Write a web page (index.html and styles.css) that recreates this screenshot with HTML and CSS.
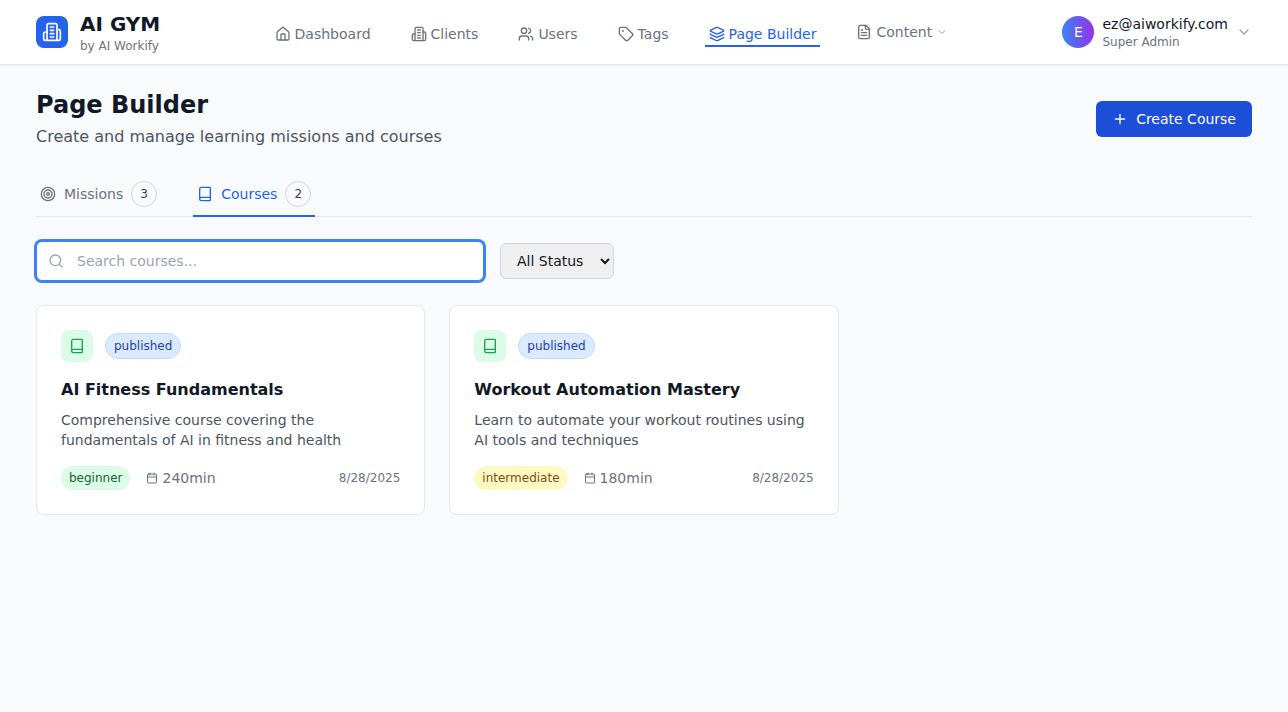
FILE: index.html
```html
<!DOCTYPE html>
<html lang="en">
<head>
<meta charset="utf-8">
<title>Page Builder</title>
<link rel="stylesheet" href="styles.css">
</head>
<body>
<header class="topbar">
  <div class="brand">
    <div class="brand-mark">
      <svg class="i20" viewBox="0 0 24 24"><path d="M6 22V4a2 2 0 0 1 2-2h8a2 2 0 0 1 2 2v18Z"/><path d="M6 12H4a2 2 0 0 0-2 2v6a2 2 0 0 0 2 2h2"/><path d="M18 9h2a2 2 0 0 1 2 2v9a2 2 0 0 1-2 2h-2"/><path d="M10 6h4"/><path d="M10 10h4"/><path d="M10 14h4"/><path d="M10 18h4"/></svg>
    </div>
    <div class="brand-text">
      <div class="brand-name">AI GYM</div>
      <div class="brand-sub">by AI Workify</div>
    </div>
  </div>
  <nav class="nav">
    <a class="nav-link"><svg class="i16" viewBox="0 0 24 24"><path d="M15 21v-8a1 1 0 0 0-1-1h-4a1 1 0 0 0-1 1v8"/><path d="M3 10a2 2 0 0 1 .709-1.528l7-5.999a2 2 0 0 1 2.582 0l7 5.999A2 2 0 0 1 21 10v9a2 2 0 0 1-2 2H5a2 2 0 0 1-2-2z"/></svg>Dashboard</a>
    <a class="nav-link"><svg class="i16" viewBox="0 0 24 24"><path d="M6 22V4a2 2 0 0 1 2-2h8a2 2 0 0 1 2 2v18Z"/><path d="M6 12H4a2 2 0 0 0-2 2v6a2 2 0 0 0 2 2h2"/><path d="M18 9h2a2 2 0 0 1 2 2v9a2 2 0 0 1-2 2h-2"/><path d="M10 6h4"/><path d="M10 10h4"/><path d="M10 14h4"/><path d="M10 18h4"/></svg>Clients</a>
    <a class="nav-link"><svg class="i16" viewBox="0 0 24 24"><path d="M16 21v-2a4 4 0 0 0-4-4H6a4 4 0 0 0-4 4v2"/><circle cx="9" cy="7" r="4"/><path d="M22 21v-2a4 4 0 0 0-3-3.87"/><path d="M16 3.13a4 4 0 0 1 0 7.75"/></svg>Users</a>
    <a class="nav-link"><svg class="i16" viewBox="0 0 24 24"><path d="M12.586 2.586A2 2 0 0 0 11.172 2H4a2 2 0 0 0-2 2v7.172a2 2 0 0 0 .586 1.414l8.704 8.704a2.426 2.426 0 0 0 3.42 0l6.58-6.58a2.426 2.426 0 0 0 0-3.42z"/><circle cx="7.5" cy="7.5" r=".5"/></svg>Tags</a>
    <a class="nav-link active"><svg class="i16" viewBox="0 0 24 24"><path d="M12.83 2.18a2 2 0 0 0-1.66 0L2.6 6.08a1 1 0 0 0 0 1.83l8.58 3.91a2 2 0 0 0 1.66 0l8.58-3.9a1 1 0 0 0 0-1.83z"/><path d="M2 12a1 1 0 0 0 .58.91l8.6 3.91a2 2 0 0 0 1.65 0l8.58-3.9A1 1 0 0 0 22 12"/><path d="M2 17a1 1 0 0 0 .58.91l8.6 3.91a2 2 0 0 0 1.65 0l8.58-3.9A1 1 0 0 0 22 17"/></svg>Page Builder</a>
    <a class="nav-link dropdown"><svg class="i16" viewBox="0 0 24 24"><path d="M15 2H6a2 2 0 0 0-2 2v16a2 2 0 0 0 2 2h12a2 2 0 0 0 2-2V7Z"/><path d="M14 2v4a2 2 0 0 0 2 2h4"/><path d="M10 9H8"/><path d="M16 13H8"/><path d="M16 17H8"/></svg>Content<svg class="i12" viewBox="0 0 24 24"><path d="m6 9 6 6 6-6"/></svg></a>
  </nav>
  <div class="user">
    <div class="avatar">E</div>
    <div class="user-text">
      <div class="user-mail">ez@aiworkify.com</div>
      <div class="user-role">Super Admin</div>
    </div>
    <svg class="i16 user-caret" viewBox="0 0 24 24"><path d="m6 9 6 6 6-6"/></svg>
  </div>
</header>
<main class="page">
  <section class="page-head">
    <div>
      <h1 class="title">Page Builder</h1>
      <p class="subtitle">Create and manage learning missions and courses</p>
    </div>
    <button class="primary"><svg class="i16" viewBox="0 0 24 24"><path d="M5 12h14"/><path d="M12 5v14"/></svg>Create Course</button>
  </section>
  <div class="tabs">
    <a class="tab"><svg class="i16" viewBox="0 0 24 24"><circle cx="12" cy="12" r="10"/><circle cx="12" cy="12" r="6"/><circle cx="12" cy="12" r="2"/></svg>Missions<span class="count">3</span></a>
    <a class="tab current"><svg class="i16" viewBox="0 0 24 24"><path d="M4 19.5v-15A2.5 2.5 0 0 1 6.5 2H19a1 1 0 0 1 1 1v18a1 1 0 0 1-1 1H6.5a1 1 0 0 1 0-5H20"/></svg>Courses<span class="count">2</span></a>
  </div>
  <div class="filters">
    <div class="search">
      <svg class="i16 search-icon" viewBox="0 0 24 24"><path d="m21 21-4.34-4.34"/><circle cx="11" cy="11" r="8"/></svg>
      <input class="search-input" type="text" placeholder="Search courses...">
    </div>
    <select class="status"><option>All Status</option></select>
  </div>
  <div class="cards">
    <article class="card">
      <div class="card-top">
        <div class="card-icon"><svg class="i16" viewBox="0 0 24 24"><path d="M4 19.5v-15A2.5 2.5 0 0 1 6.5 2H19a1 1 0 0 1 1 1v18a1 1 0 0 1-1 1H6.5a1 1 0 0 1 0-5H20"/></svg></div>
        <span class="state">published</span>
      </div>
      <h3 class="card-title">AI Fitness Fundamentals</h3>
      <p class="card-desc">Comprehensive course covering the fundamentals of AI in fitness and health</p>
      <div class="card-meta">
        <span class="level beginner">beginner</span>
        <span class="duration"><svg class="i12" viewBox="0 0 24 24"><path d="M8 2v4"/><path d="M16 2v4"/><rect x="3" y="4" width="18" height="18" rx="2"/><path d="M3 10h18"/></svg>240min</span>
        <span class="date">8/28/2025</span>
      </div>
    </article>
    <article class="card">
      <div class="card-top">
        <div class="card-icon"><svg class="i16" viewBox="0 0 24 24"><path d="M4 19.5v-15A2.5 2.5 0 0 1 6.5 2H19a1 1 0 0 1 1 1v18a1 1 0 0 1-1 1H6.5a1 1 0 0 1 0-5H20"/></svg></div>
        <span class="state">published</span>
      </div>
      <h3 class="card-title">Workout Automation Mastery</h3>
      <p class="card-desc">Learn to automate your workout routines using AI tools and techniques</p>
      <div class="card-meta">
        <span class="level intermediate">intermediate</span>
        <span class="duration"><svg class="i12" viewBox="0 0 24 24"><path d="M8 2v4"/><path d="M16 2v4"/><rect x="3" y="4" width="18" height="18" rx="2"/><path d="M3 10h18"/></svg>180min</span>
        <span class="date">8/28/2025</span>
      </div>
    </article>
  </div>
</main>
</body>
</html>
```
FILE: styles.css
```css
* { box-sizing: border-box; }
html, body { margin: 0; padding: 0; }
body {
  min-height: 712px;
  background: #f9fafb;
  font-family: "DejaVu Sans", sans-serif;
  color: #111827;
  -webkit-font-smoothing: antialiased;
}
svg { fill: none; stroke: currentColor; stroke-width: 2; stroke-linecap: round; stroke-linejoin: round; flex: none; display: block; }
.i20 { width: 20px; height: 20px; }
.i16 { width: 16px; height: 16px; }
.i12 { width: 12px; height: 12px; }

.topbar {
  height: 65px;
  padding: 0 36px;
  display: flex;
  align-items: center;
  justify-content: space-between;
  background: #fff;
  border-bottom: 1px solid #e5e7eb;
  box-shadow: 0 1px 2px rgba(0,0,0,.05);
}
.brand { display: flex; align-items: center; gap: 12px; }
.brand-mark {
  width: 32px; height: 32px;
  border-radius: 8px;
  background: #2563eb;
  color: #fff;
  display: flex; align-items: center; justify-content: center;
}
.brand-name { font-size: 20px; line-height: 28px; font-weight: 700; color: #111827; }
.brand-sub { font-size: 12px; line-height: 16px; color: #6b7280; }

.nav { display: flex; align-items: center; gap: 32px; }
.nav-link {
  display: flex; align-items: center; gap: 4px;
  padding: 7px 4px 1px;
  border-bottom: 2px solid transparent;
  font-size: 14px; line-height: 20px;
  color: #6b7280;
}
.nav-link.active { color: #2563eb; border-bottom-color: #2563eb; }
.nav-link.dropdown { padding: 0 4px; border-bottom: 0; }
.nav-link.dropdown .i12 { color: #9ca3af; }

.user { display: flex; align-items: center; gap: 8px; }
.avatar {
  width: 32px; height: 32px; border-radius: 50%;
  background: linear-gradient(to right, #3b82f6, #9333ea);
  color: #fff;
  font-size: 14px;
  display: flex; align-items: center; justify-content: center;
}
.user-mail { font-size: 14px; line-height: 20px; color: #111827; }
.user-role { font-size: 12px; line-height: 16px; color: #6b7280; }
.user-caret { color: #9ca3af; }

.page { padding: 24px 36px; }
.page-head { display: flex; align-items: center; justify-content: space-between; margin-bottom: 28px; }
.title { margin: 0 0 4px; font-size: 24px; line-height: 32px; font-weight: 700; color: #111827; }
.subtitle { margin: 0; font-size: 16px; line-height: 24px; color: #4b5563; }
.primary {
  height: 36px; padding: 0 16px;
  display: flex; align-items: center; gap: 8px;
  background: #1d4ed8; color: #fff;
  border: 0; border-radius: 6px;
  font-family: inherit; font-size: 14px; line-height: 20px;
}

.tabs { display: flex; gap: 32px; border-bottom: 1px solid #e5e7eb; margin-bottom: 24px; }
.tab {
  display: flex; align-items: center; gap: 8px;
  padding: 4px 4px 8px;
  margin-bottom: -1px;
  border-bottom: 2px solid transparent;
  font-size: 14px; line-height: 20px;
  color: #6b7280;
}
.tab.current { color: #2563eb; border-bottom-color: #2563eb; }
.count {
  width: 26px; height: 26px;
  border: 1px solid #d1d5db; border-radius: 50%;
  display: flex; align-items: center; justify-content: center;
  font-size: 12px; color: #374151;
}

.filters { display: flex; align-items: center; gap: 16px; margin-bottom: 24px; }
.search { position: relative; width: 448px; }
.search-icon { position: absolute; left: 12px; top: 12px; color: #9ca3af; }
.search-input {
  display: block;
  width: 100%; height: 40px;
  padding: 0 40px;
  border: 1px solid #3b82f6; border-radius: 6px;
  box-shadow: 0 0 0 2px #3b82f6;
  background: #fff;
  font-family: inherit; font-size: 14px;
  outline: none;
}
.search-input::placeholder { color: #9ca3af; }
.status {
  height: 36px; width: 114px;
  padding: 0 12px;
  border: 1px solid #d1d5db; border-radius: 6px;
  background-color: #efefef;
  font-family: inherit; font-size: 14px;
  color: #111827;
}

.cards { display: grid; grid-template-columns: repeat(3, 1fr); gap: 24px; }
.card {
  background: #fff;
  border: 1px solid #e5e7eb; border-radius: 8px;
  padding: 24px;
}
.card-top { display: flex; align-items: center; gap: 12px; margin-bottom: 16px; }
.card-icon {
  width: 32px; height: 32px; border-radius: 8px;
  background: #dcfce7; color: #16a34a;
  display: flex; align-items: center; justify-content: center;
}
.state {
  height: 26px; padding: 0 8px;
  display: flex; align-items: center;
  border: 1px solid #bfdbfe; border-radius: 13px;
  background: #dbeafe; color: #1e40af;
  font-size: 12px;
}
.card-title { margin: 0 0 8px; font-size: 16px; line-height: 24px; font-weight: 700; color: #111827; }
.card-desc { margin: 0 0 16px; font-size: 14px; line-height: 20px; color: #4b5563; }
.card-meta { display: flex; align-items: center; gap: 16px; }
.level {
  height: 24px; padding: 0 8px;
  display: flex; align-items: center;
  border-radius: 12px;
  font-size: 12px;
}
.beginner { background: #dcfce7; color: #166534; }
.intermediate { background: #fef9c3; color: #854d0e; }
.duration { display: flex; align-items: center; gap: 4px; font-size: 14px; color: #6b7280; }
.date { margin-left: auto; font-size: 12px; color: #6b7280; }
```
